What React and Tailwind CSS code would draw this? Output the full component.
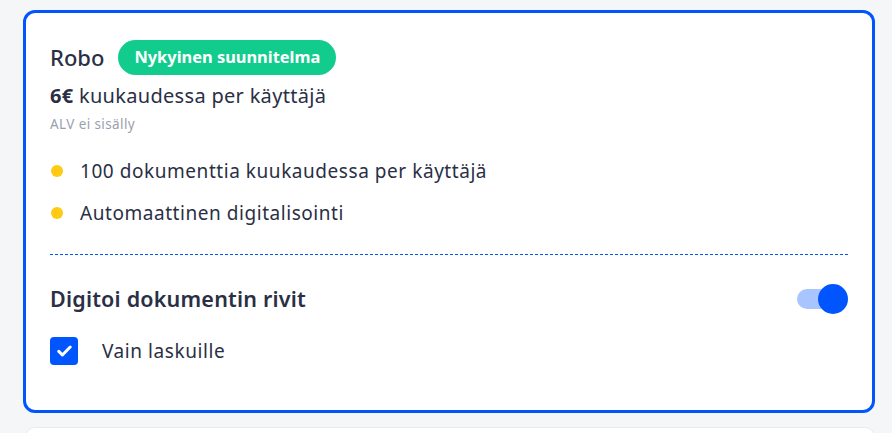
import React, { useState } from 'react'

const font = { fontFamily: '"Noto Sans", "Open Sans", sans-serif' }

const Bullet = ({ children }) => (
  <li className="flex items-center h-[42px]">
    <span className="w-[12px] h-[12px] rounded-full bg-[#ffc914] ml-[1px] mr-[17px]" />
    <span className="text-[19px] tracking-[0.55px] text-[#2a2f45]">{children}</span>
  </li>
)

const App = () => {
  const [enabled, setEnabled] = useState(true)
  const [onlyInvoices, setOnlyInvoices] = useState(true)

  return (
    <div className="w-[892px] h-[433px] overflow-hidden bg-[#f5f6f8] pt-[10px] pl-[23px] pr-[17px]" style={font}>
      <div className="border-[3px] border-[#0055ff] rounded-[12px] bg-white h-[403px] px-[24px] pt-[27px]">
        <div className="flex items-center gap-[14px] h-[35px]">
          <span className="text-[22px] font-medium text-[#2a2f45]">Robo</span>
          <span className="h-[35px] px-[16px] rounded-full bg-[#12cc8e] text-white text-[16.4px] font-bold flex items-center">
            Nykyinen suunnitelma
          </span>
        </div>
        <p className="text-[20px] tracking-[0.3px] text-[#2a2f45] mt-[8px] leading-[26px]">
          <span className="font-bold">6€</span> kuukaudessa per käyttäjä
        </p>
        <p className="text-[13.5px] tracking-[0.4px] leading-[18px] text-[#9a9fad] mt-[6px]">ALV ei sisälly</p>

        <ul className="mt-[17px]">
          <Bullet>100 dokumenttia kuukaudessa per käyttäjä</Bullet>
          <Bullet>Automaattinen digitalisointi</Bullet>
        </ul>

        <div className="h-px mt-[20px] bg-[repeating-linear-gradient(90deg,#0055ff_0_3px,transparent_3px_5px)]" />

        <div className="flex items-center justify-between mt-[28px] h-[32px]">
          <span className="text-[21.5px] tracking-[0.2px] font-semibold text-[#2a2f45]">Digitoi dokumentin rivit</span>
          <button
            onClick={() => setEnabled(!enabled)}
            className="relative w-[51px] h-[30px] flex items-center"
          >
            <span className={`w-[34px] h-[20px] rounded-full ${enabled ? 'bg-[#a8c5ff]' : 'bg-[#d4d7de]'}`} />
            <span
              className={`absolute top-0 w-[30px] h-[30px] rounded-full ${enabled ? 'right-0 bg-[#0055ff]' : 'left-0 bg-white shadow'}`}
            />
          </button>
        </div>

        <label className="flex items-center mt-[22px] cursor-pointer">
          <span
            onClick={() => setOnlyInvoices(!onlyInvoices)}
            className={`w-[28px] h-[28px] rounded-[4px] flex items-center justify-center ${onlyInvoices ? 'bg-[#0055ff]' : 'border-2 border-[#c4c8d2]'}`}
          >
            {onlyInvoices && (
              <svg width="15" height="12" viewBox="0 0 15 12" fill="none">
                <path d="M1.8 6.4L5.4 10L13.2 2" stroke="white" strokeWidth="3" strokeLinecap="round" strokeLinejoin="round" />
              </svg>
            )}
          </span>
          <span className="ml-[24px] text-[19px] tracking-[0.57px] text-[#2a2f45]">Vain laskuille</span>
        </label>
      </div>
      <div className="mt-[14px] ml-[2px] h-[40px] bg-white rounded-[10px] border border-[#e6ebf5]" />
    </div>
  )
}

export default App
